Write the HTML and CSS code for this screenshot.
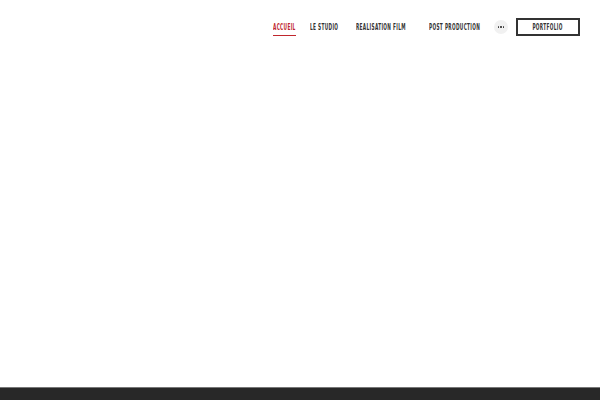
FILE: index.html
```html
<!DOCTYPE html>
<html>
<head>
<meta charset="utf-8">
<link rel="stylesheet" href="styles.css">
</head>
<body>
<div class="page">
  <header class="header">
    <nav class="nav">
      <a class="nav-item w1 active"><span class="lbl">ACCUEIL</span></a>
      <a class="nav-item w2"><span class="lbl">LE STUDIO</span></a>
      <a class="nav-item w3"><span class="lbl">REALISATION FILM</span></a>
      <a class="nav-item w4"><span class="lbl">POST PRODUCTION</span></a>
      <span class="more"><span class="dot"></span><span class="dot"></span><span class="dot"></span></span>
      <a class="btn"><span class="lbl">PORTFOLIO</span></a>
    </nav>
  </header>
  <main class="main"></main>
  <footer class="footer"></footer>
</div>
</body>
</html>
```
FILE: styles.css
```css
html, body { margin: 0; padding: 0; background: #fff; }
.page { width: 600px; height: 400px; display: flex; flex-direction: column; overflow: hidden; }
.header { height: 54px; display: flex; justify-content: flex-end; align-items: flex-start; padding-right: 20px; }
.nav { display: flex; align-items: center; margin-top: 18px; height: 18px; }
.nav-item, .btn {
  font-family: "DejaVu Sans Condensed", "DejaVu Sans", sans-serif;
  font-stretch: condensed;
  font-weight: bold;
  font-size: 9px;
  letter-spacing: 0.6px;
  color: #333;
  white-space: nowrap;
}
.nav-item { position: relative; display: block; height: 10px; line-height: 10px; }
.lbl { display: inline-block; transform: scaleX(0.53); transform-origin: 0 50%; }
.w1 { width: 23px; margin-right: 14px; }
.w2 { width: 29px; margin-right: 17px; }
.w3 { width: 52px; margin-right: 21px; }
.w4 { width: 53px; margin-right: 12px; }
.nav-item.active { color: #c0272d; }
.nav-item.active::after {
  content: ""; position: absolute; left: 0; right: 0; bottom: -4px; height: 1px; background: #c0272d;
}
.more { width: 14px; height: 14px; border-radius: 50%; background: #f1f1f1; display: flex; align-items: center; justify-content: center; gap: 1px; margin-right: 8px; }
.dot { width: 1.5px; height: 1.5px; background: #333; border-radius: 50%; }
.btn {
  border: 2px solid #333;
  width: 60px; height: 14px; box-sizing: content-box;
  display: flex; align-items: center; justify-content: center;
}
.btn .lbl { transform-origin: 50% 50%; }
.main { flex: 1; }
.footer { height: 12px; background: #282828; border-top: 1px solid #777; }
```
